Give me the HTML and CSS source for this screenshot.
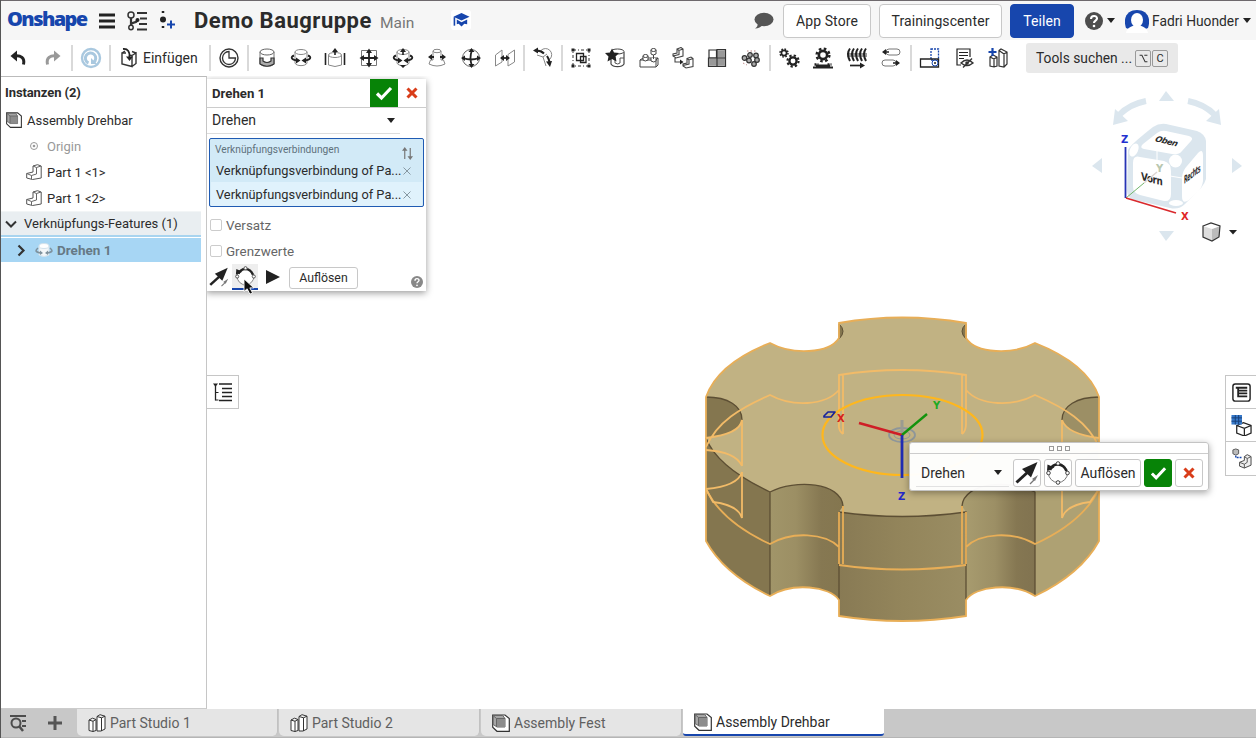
FILE: index.html
```html
<!DOCTYPE html>
<html lang="de">
<head>
<meta charset="utf-8">
<title>Demo Baugruppe</title>
<link rel="stylesheet" href="styles.css">
</head>
<body>
<svg class="defs" aria-hidden="true">
  <symbol id="assembly" viewBox="0 0 18 18"><path d="M.700 1h12.300l4.300 3.500v12.800H5l-4.300-4z" fill="#fff" stroke="#333" stroke-width="1.200"/><path d="M1.200 1.500h9.500l2.300 3V13H5l-3.800-2.500z" fill="#a6a6a6" stroke="#666"/><path d="M4.500 4.500H13V13H4.500z" fill="#8c8c8c"/><path d="M1 1.500l3.500 3H13M4.500 4.500V13" fill="none" stroke="#666"/></symbol>
  <symbol id="part" viewBox="0 0 16 16"><path d="M7 2L11.500.700 15.200 2v12l-8.700 1.500L.700 14V9.500L7 8z" fill="#fff" stroke="#555"/><path d="M7 2l3.500 1.500L15 2M10.500 3.500V10l-5 1.500v3.500M.700 9.500l4.800 2" fill="none" stroke="#666"/></symbol>
  <symbol id="studio" viewBox="0 0 18 18"><path d="M1 6l3.500-1.800L8 5.500v11L5 17.500l-4-1zM1 6l4 1.300L8 5.500M5 7.300v10.200M9 2.500L12 .700l5 1.500V15l-4 2H9zM9 2.500l4.500 1.300L17 2.200M13.500 3.800V17" fill="#fff" stroke="#333"/></symbol>
  <symbol id="check" viewBox="0 0 18 16"><path d="M2 8.500l4.500 4.500L16 3" fill="none" stroke="#fff" stroke-width="3.200"/></symbol>
  <symbol id="cross" viewBox="0 0 12 12"><path d="M1.500 1.500l9 9m0-9l-9 9" stroke="#d93d1a" stroke-width="3"/></symbol>
  <symbol id="arrow" viewBox="0 0 24 24"><path d="M1.500 21.500L14 10" stroke="#222" stroke-width="3"/><path d="M22.500 1L7 8l9 8.500z" fill="#222"/><path d="M15 23l4-4" stroke="#777" stroke-width="1.300"/><path d="M23 14l-6 4 3 2z" fill="#777"/></symbol>
  <symbol id="spin" viewBox="0 0 24 24"><circle cx="12" cy="12" r="9.500" fill="#fff" stroke="#777"/><path d="M4 9C7 1.500 17 1.500 20.500 10" fill="none" stroke="#222" stroke-width="2.600"/><path d="M1 10l.5-6.500 7 3z" fill="#222"/><g fill="#fff" stroke="#444"><circle cx="12" cy="2.500" r="1.800"/><circle cx="21.500" cy="12" r="1.800"/><circle cx="12" cy="21.500" r="1.800"/><circle cx="2.500" cy="12" r="1.800"/></g></symbol>
  <symbol id="revolve" viewBox="0 0 22 22"><path d="M5 5v11c1 3.500 11 3.500 12 0V5" fill="#fff" stroke="#888"/><ellipse cx="11" cy="5" rx="6" ry="2.500" fill="#fff" stroke="#888"/><path d="M4 8.500C0 10 1.500 13 7 13.500M18 8.500C22 10 20.500 13 15 13.500" fill="none" stroke="#222" stroke-width="1.900"/><path d="M6 10.500l4.500 3-4.500 3zM16 10.500l-4.500 3 4.500 3z" fill="#222"/></symbol>
  <symbol id="gear" viewBox="0 0 12 12"><circle cx="6" cy="6" r="3.100" fill="none" stroke="#222" stroke-width="2"/><circle cx="6" cy="6" r="4.800" fill="none" stroke="#222" stroke-width="1.800" stroke-dasharray="1.950 1.820"/></symbol>
  <symbol id="help" viewBox="0 0 18 18"><circle cx="9" cy="9" r="9" fill="currentColor"/><path d="M6 7c0-4 6-4 6-.5 0 2.300-3 2-3 4.500" fill="none" stroke="#fff" stroke-width="2.100"/><circle cx="9" cy="14" r="1.300" fill="#fff"/></symbol>
</svg>

<header class="topbar">
  <div class="logo">Onshape</div>
  <svg class="menu" viewBox="0 0 18 16"><path d="M1 2h16M1 8h16M1 14h16" stroke="#222" stroke-width="3"/></svg>
  <svg class="versions" viewBox="0 0 22 20"><g fill="none" stroke="#333" stroke-width="1.500"><circle cx="5" cy="4" r="3"/><circle cx="5" cy="16.500" r="2.200"/><path d="M5 7v7M5.500 13c2-3 6 0 6-5" stroke-width="2.200"/><path d="M11 2h10M14 7.500h7M13 13h8M11 18.500h10" stroke-width="1.800"/></g><circle cx="11.500" cy="9" r="2" fill="#222"/></svg>
  <svg class="addversion" viewBox="0 0 18 20"><path d="M5 0v3M5 15v3" stroke="#222" stroke-width="2.500" stroke-dasharray="2 1"/><circle cx="5" cy="8.500" r="3" fill="#222"/><path d="M13 9.500v8M9 13.500h8" stroke="#1746ad" stroke-width="2"/></svg>
  <h1 class="title">Demo Baugruppe</h1>
  <span class="branch">Main</span>
  <span class="edu"><svg viewBox="0 0 18 16"><path d="M9 .5l8.500 4L9 8.500.5 4.500z" fill="#1746ad"/><path d="M4 7.500v5l2-.5 3 3 3-3 3 .5v-5L9 10.500z" fill="#1746ad"/><path d="M1.500 5v9" stroke="#1746ad" stroke-width="1.700"/></svg></span>
  <svg class="chat" viewBox="0 0 20 18"><ellipse cx="10" cy="7.500" rx="9.500" ry="6.700" fill="#555"/><path d="M4 10q0 5-3 6.500 5 0 8-4z" fill="#555"/></svg>
  <button class="btn store">App Store</button>
  <button class="btn training">Trainingscenter</button>
  <button class="btn share">Teilen</button>
  <svg class="help" viewBox="0 0 18 18"><use href="#help"/></svg><i class="caret"></i>
  <svg class="avatar" viewBox="0 0 24 24"><path d="M1 19C-3 7 4 1 12 1s15 6 11 18l-5 2H6z" fill="#1746ad"/><ellipse cx="12" cy="11" rx="6" ry="7" fill="#fff"/><path d="M1 24c1-6 6-6 8-8h6c2 2 7 2 8 8z" fill="#fff"/></svg>
  <span class="user">Fadri Huonder</span><i class="caret"></i>
</header>

<nav class="toolbar">
  <span class="tool"><svg viewBox="0 0 22 22"><path d="M7 9C14 8 18 11 16.500 17.500" fill="none" stroke="#222" stroke-width="3"/><path d="M3.500 9L10 3.500v11z" fill="#222"/></svg></span>
  <span class="tool redo"><svg viewBox="0 0 22 22"><path d="M15 9C8 8 4 11 5.500 17.500" fill="none" stroke="#999" stroke-width="3"/><path d="M18.500 9L12 3.500v11z" fill="#999"/></svg></span>
  <i class="sep"></i>
  <span class="tool"><svg viewBox="0 0 22 22"><circle cx="11" cy="11" r="9" fill="none" stroke="#a9c8df" stroke-width="2.400"/><path d="M8.500 16a5.200 5.200 0 1 1 5-.5" fill="none" stroke="#a9c8df" stroke-width="3"/><path d="M11 11v6h6z" fill="#a9c8df"/></svg></span>
  <i class="sep"></i>
  <span class="insert"><svg viewBox="0 0 22 22"><path d="M8 6H4v11l10 2.500V8.500l-3-.5M14 8.500L18 6v10.500l-4 3M18 6l-4-1.500M4 6l3-2" fill="none" stroke="#333" stroke-width="1.400"/><path d="M5 2c5-.5 7 3 6.500 8" fill="none" stroke="#222" stroke-width="1.800"/><path d="M8 9.500h7L11.500 14z" fill="#222"/></svg>Einfügen</span>
  <i class="sep"></i>
  <span class="tool"><svg viewBox="0 0 22 22"><circle cx="11" cy="11" r="9" fill="none" stroke="#333" stroke-width="1.400"/><path d="M11 4.500V11H17.500A6.500 6.500 0 1 1 11 4.500z" fill="none" stroke="#333" stroke-width="1.300"/></svg></span>
  <i class="sep"></i>
  <span class="tool"><svg viewBox="0 0 22 22"><path d="M4 5v12c2 3 12 3 14 0V5" fill="#fff" stroke="#777"/><path d="M4 11h3v3q4 3 8 0v-3h3v6q-7 4.500-14 0z" fill="#aaa" stroke="#333" stroke-width="1.200"/><ellipse cx="11" cy="5" rx="7" ry="3" fill="#fff" stroke="#666"/></svg></span>
  <span class="tool"><svg viewBox="0 0 22 22"><use href="#revolve"/></svg></span>
  <span class="tool"><svg viewBox="0 0 22 22"><path d="M4.500 8v10q6.500 3 13 0V8" fill="#fff" stroke="#888"/><ellipse cx="11" cy="8" rx="6.500" ry="2.500" fill="#fff" stroke="#888"/><path d="M1.500 6v12M20.500 6v12M11 8V4" stroke="#222" stroke-width="1.600"/><path d="M8 5l3-4 3 4z" fill="#222"/></svg></span>
  <span class="tool"><svg viewBox="0 0 22 22"><path d="M3.500 3.500h15v15h-15z" fill="none" stroke="#777"/><path d="M11 4v14M4 11h14" stroke="#222" stroke-width="1.800"/><path d="M8 6l3-4.500L14 6zM8 16l3 4.500 3-4.500zM6 8l-4.500 3L6 14zM16 8l4.500 3-4.500 3z" fill="#222"/></svg></span>
  <span class="tool"><svg viewBox="0 0 22 22"><use href="#revolve"/><path d="M11 8V3" stroke="#222" stroke-width="1.600"/><path d="M8 5l3-4 3 4zM8 18l3 3 3-3z" fill="#222"/></svg></span>
  <span class="tool"><svg viewBox="0 0 22 22"><path d="M7 4v9H4.500L3 17q8 4 16 0l-1.500-4H15V4" fill="#fff" stroke="#888"/><ellipse cx="11" cy="4" rx="4" ry="1.700" fill="#fff" stroke="#888"/><path d="M4 10h4M14 10h4" stroke="#222" stroke-width="1.800"/><path d="M6 7l-4 3 4 3zM16 7l4 3-4 3z" fill="#222"/></svg></span>
  <span class="tool"><svg viewBox="0 0 22 22"><circle cx="11" cy="11" r="8.500" fill="none" stroke="#666"/><path d="M12 3Q9 11 12 19M3 11q8 3 16 0" fill="none" stroke="#222" stroke-width="1.800"/><path d="M8.500 5l3-4 3 4zM8.500 17l3 4 3-4zM5 8.500L1 11l4 3zM17 8.500l4 2.500-4 3z" fill="#222"/></svg></span>
  <span class="tool"><svg viewBox="0 0 22 22"><path d="M1.500 8L8 3v12l-6.500 4zM14 7.500L20.500 3v12L14 19z" fill="none" stroke="#888"/><path d="M7 11h8" stroke="#222" stroke-width="1.800"/><path d="M10 8l-4 3 4 3zM12 8l4 3-4 3z" fill="#222"/></svg></span>
  <i class="sep"></i>
  <span class="tool"><svg viewBox="0 0 22 22"><path d="M9 3.500a6 6 0 0 1 9 8.500M5 8l6 2 3 9M11 10l4-3" fill="none" stroke="#888"/><path d="M4 3.500q5 0 8 3M15 9q2 3 2.500 6" fill="none" stroke="#222" stroke-width="2"/><path d="M1 3.500L6 .5v6zM14 14.500l6-.5-2 6z" fill="#222"/></svg></span>
  <i class="sep"></i>
  <span class="tool"><svg viewBox="0 0 22 22"><path d="M3 3h16v16H3z" fill="none" stroke="#333" stroke-dasharray="3 2 1 2"/><path d="M1.500 1.500h3v3h-3zM17.500 1.500h3v3h-3zM1.500 17.500h3v3h-3zM17.500 17.500h3v3h-3z" fill="#222"/><path d="M6.500 6.500h7v7h-7zM10.500 9.500h5.500v6h-5.500z" fill="#fff" stroke="#222" stroke-width="1.300"/></svg></span>
  <span class="tool"><svg viewBox="0 0 22 22"><path d="M7 5v12c2 3.500 11 3.500 13 0V5" fill="#fff" stroke="#444" stroke-width="1.200"/><ellipse cx="13.500" cy="4.500" rx="6.500" ry="2.500" fill="#fff" stroke="#444"/><path d="M11 10v6q3 2 5 0v-5h4" fill="none" stroke="#555"/><path d="M8 1.500l2 4 5 .5-3.500 3.500 1 5L8 12l-4.500 2.500 1-5L1 6l5-.5z" fill="#222"/></svg></span>
  <span class="tool"><svg viewBox="0 0 22 22"><g fill="#fff" stroke="#444"><path d="M2 13l3-2h15v7l-2 2H2zM2 13h16v7M18 13l2-2"/><path d="M5 9v4q2 2 5 0V9M13 3v4q2 2 5 0V3M13 11v3q3 2 5 0v-3"/><ellipse cx="7.500" cy="9" rx="2.500" ry="1.500"/><ellipse cx="15.500" cy="3" rx="2.500" ry="1.500"/><path d="M15.500 8v4"/></g></svg></span>
  <span class="tool"><svg viewBox="0 0 22 22"><path d="M5 2l4-1.500L11 2v7l-7 2-3-2V7l4-1zM5 2l2 1.500L11 2M7 3.500v4L1 9M15 11.500l4-1.500 2 1.500v8L14 21l-3-2v-2l4-1zM15 11.500l2 1.500 4-1.500M17 13v4l-6 1.500M3 11v4h6" fill="none" stroke="#444" stroke-width="1.100"/><path d="M8 12.500l3.500 2.500L8 17.500z" fill="#222"/></svg></span>
  <span class="tool"><svg viewBox="0 0 22 22"><g fill="#aaa" stroke="#333" stroke-width="1.200"><path d="M3 3h7.500v8H3z" fill="#fff"/><path d="M11 2.500h8.500V11H11zM2.500 11H11v8.500H2.500zM11 11h8.500v8.500H11z"/></g><path d="M5 12v6M7 12v6M9 12v6M13 4v6M15 4v6M17 4v6M13 12v6M15 12v6M17 12v6" stroke="#888"/></svg></span>
  <span class="tool"><svg viewBox="0 0 22 22"><g fill="#aaa" stroke="#333" stroke-width="1.200"><circle cx="4.500" cy="11" r="2.300"/><circle cx="10" cy="8" r="2.300"/><circle cx="16" cy="8.500" r="2.300"/><circle cx="9" cy="13.500" r="2.300"/><circle cx="14" cy="17" r="2.300"/><circle cx="17" cy="13" r="2.300"/></g><path d="M7 4h10M3 16l4 2" stroke="#b88" stroke-dasharray="1.500 2"/></svg></span>
  <i class="sep"></i>
  <span class="tool"><svg viewBox="0 0 22 22"><use href="#gear" x="1" y="1" width="10" height="10"/><use href="#gear" x="8" y="7" width="14" height="14"/></svg></span>
  <span class="tool"><svg viewBox="0 0 22 22"><use href="#gear" x="3" y="0" width="16" height="16"/><path d="M1 20.500h20M4 18.500h14" stroke="#222" stroke-width="2"/><path d="M2.500 17.500h4M15.500 17.500h4" stroke="#222" stroke-width="2.500" stroke-dasharray="2 1"/></svg></span>
  <span class="tool"><svg viewBox="0 0 22 22"><path d="M1 8h20" stroke="#999" stroke-width="4"/><path d="M4 1.500q-4 5 0 12.500M8 1.500q-4 5 0 12.500M12 1.500q-4 5 0 12.500M16 1.500q-4 5 0 12.500M20 1.500q-4 5 0 12.500" fill="none" stroke="#222" stroke-width="2"/><path d="M4 18.500h11" stroke="#222" stroke-width="1.700"/><path d="M14 15.500l5 3-5 3z" fill="#222"/></svg></span>
  <span class="tool"><svg viewBox="0 0 22 22"><rect x="6" y="2" width="14" height="6" rx="3" fill="#fff" stroke="#777"/><rect x="2" y="13" width="14" height="6" rx="3" fill="#fff" stroke="#777"/><path d="M4 5h5M13 16h5" stroke="#222" stroke-width="1.600"/><path d="M6 2L2 5l4 3zM16 13l4 3-4 3z" fill="#222"/></svg></span>
  <i class="sep"></i>
  <span class="tool"><svg viewBox="0 0 22 22"><path d="M12 2h7.500v11H12z" fill="none" stroke="#1746ad" stroke-width="1.300" stroke-dasharray="2 1"/><path d="M1.500 12h18v8h-18z" fill="none" stroke="#222" stroke-width="1.300"/><circle cx="16" cy="16" r="3" fill="#fff" stroke="#1746ad"/><circle cx="16" cy="16" r="1" fill="#222"/></svg></span>
  <span class="tool"><svg viewBox="0 0 22 22"><path d="M8 18H4V2h13v8M6 5.500h9M6 8.500h9M6 11.500h5" fill="none" stroke="#222" stroke-width="1.200"/><path d="M8 16q6-6 12 0-6 5-12 0zM10 20.500l9-9" fill="none" stroke="#333" stroke-width="1.400"/><circle cx="14" cy="16" r="1.800" fill="#333"/></svg></span>
  <span class="tool"><svg viewBox="0 0 22 22"><path d="M3 10l3-2 4 2v9l-3 1-4-1zM3 10l4 2 3-2M7 12v8M12 3.500L14 2l6 3v12l-3 3-5-1zM12 3.500l5 3.500 3-2M17 7v13" fill="#fff" stroke="#333" stroke-width="1.200"/><path d="M5.500 1v8M1.500 5h8" stroke="#1746ad" stroke-width="2.200"/></svg></span>
  <div class="search"><span>Tools suchen ...</span><kbd><svg viewBox="0 0 14 14"><path d="M2 3h3l4 8h3M8 3h4" fill="none" stroke="#333" stroke-width="1.300"/></svg></kbd><kbd>C</kbd></div>
</nav>

<main class="workspace">
  <aside class="tree">
    <h2 class="tree-head">Instanzen (2)</h2>
    <div class="row root"><svg viewBox="0 0 18 18"><use href="#assembly"/></svg>Assembly Drehbar</div>
    <div class="row origin"><svg viewBox="0 0 16 16"><circle cx="8" cy="8" r="3.500" fill="none" stroke="#999"/><circle cx="8" cy="8" r="1.300" fill="#999"/></svg>Origin</div>
    <div class="row child"><svg viewBox="0 0 16 16"><use href="#part"/></svg>Part 1 &lt;1&gt;</div>
    <div class="row child"><svg viewBox="0 0 16 16"><use href="#part"/></svg>Part 1 &lt;2&gt;</div>
    <div class="row group"><svg viewBox="0 0 12 12"><path d="M1 3.500l5 5 5-5" fill="none" stroke="#333" stroke-width="2"/></svg>Verknüpfungs-Features (1)</div>
    <div class="row selected"><svg class="chevron" viewBox="0 0 12 12"><path d="M3.500 1l5 5-5 5" fill="none" stroke="#333" stroke-width="2.200"/></svg><svg class="mate" viewBox="0 0 18 16"><path d="M4 4v9q5 3 10 0V4" fill="#f4f7f9" stroke="#d3e2ec"/><ellipse cx="9" cy="4" rx="5" ry="2.500" fill="#fff" stroke="#d3e2ec"/><path d="M3 6q-5 4 3 5M15 6q5 4-3 5" fill="none" stroke="#7f929e" stroke-width="1.600"/><path d="M5 8.500l3 2.500-3 2zM13 8.500l-3 2.500 3 2z" fill="#7f929e"/></svg>Drehen 1</div>
  </aside>

  <section class="canvas">
    <svg class="scene" viewBox="207 76 1049 633">
      <defs>
        <linearGradient id="notch"><stop offset="0" stop-color="#a19569"/><stop offset=".35" stop-color="#9c8f64"/><stop offset=".7" stop-color="#867852"/><stop offset="1" stop-color="#84764f"/></linearGradient>
        <linearGradient id="notch2"><stop offset="0" stop-color="#a99d70"/><stop offset=".45" stop-color="#9c8f65"/><stop offset=".75" stop-color="#857752"/><stop offset="1" stop-color="#817350"/></linearGradient>
        <linearGradient id="front"><stop offset="0" stop-color="#887a54"/><stop offset=".5" stop-color="#93855b"/><stop offset="1" stop-color="#9a8d63"/></linearGradient>
      </defs>
      <path fill="#c1b283" d="M706 397C714 374 737 356 770 343C792 355 829 354 839 338V323Q902 312 966 323V338C976 354 1013 355 1035 343C1068 356 1091 374 1099 397V541L1035 596V492L966 512Q902 521 839 512L770 492V596L706 541Z"/>
      <path fill="#84764f" d="M706 397C728 397 742 406 742 418Q739 435 706 438Z"/>
      <path fill="#9c8f65" d="M1099 397C1077 397 1062 406 1062 420Q1068 435 1099 438Z"/>
      <path fill="#84764f" d="M706 438Q717 467 770 492V596Q724 574 706 541Z"/>
      <path fill="#aea173" d="M1099 438Q1088 467 1035 492V596Q1081 574 1099 541Z"/>
      <path fill="url(#notch)" d="M770 492C795 479 841 482 843 506L839 512V600C830 586 792 582 770 596Z"/>
      <path fill="url(#notch2)" d="M1035 492C1010 479 964 482 962 506L966 512V600C975 586 1013 582 1035 596Z"/>
      <path fill="url(#front)" d="M839 512Q902 521 966 512V616Q902 626 839 616Z"/>
      <path fill="#84764f" stroke="#5d4f34" d="M839 324q8 7 0 15zM966 324q-8 7 0 15z"/>
      <path fill="none" stroke="#5d4f34" stroke-width="1.300" d="M706 397C728 397 742 406 742 420M706 438Q717 467 770 492V596M770 492C795 479 841 482 843 506M839 512Q902 521 966 512V600M839 512V600M1035 596V492C1010 479 964 482 962 506M1099 397C1077 397 1062 406 1062 420"/>
      <g fill="none" stroke="#e8ae57" stroke-width="1.800">
        <path d="M706 397C714 374 737 356 770 343C792 355 829 354 839 338V323Q902 312 966 323V338C976 354 1013 355 1035 343C1068 356 1091 374 1099 397V541Q1081 574 1035 596C1013 582 975 586 966 600V616Q902 626 839 616V600C830 586 792 582 770 596Q724 574 706 541Z"/>
        <path d="M706 489Q722 522 770 544C792 531 825 533 839 547M1099 489Q1083 522 1035 544C1013 531 980 533 966 547M839 565Q902 574 966 565M839 512V564M843 506V564M966 512V564M962 506V564"/>
      </g>
      <g fill="none" stroke="#f2bb68" stroke-width="1.800">
        <path d="M706 447C717 422 740 408 770 395C792 407 825 406 839 390M843 434Q838 430 839 424V375Q902 365 966 375V424Q966 431 962 434M843 375V434M962 375V434M1099 447C1088 422 1065 408 1035 395C1013 407 980 406 966 390M706 438Q740 434 742 420V466M706 450Q736 452 742 466M742 472Q738 486 706 489M742 472V518Q738 505 713 502L706 489M1099 438Q1067 434 1062 420V518Q1066 505 1090 502L1099 489M1099 450Q1069 452 1062 466"/>
      </g>
      <ellipse cx="902.500" cy="435" rx="80" ry="40" fill="none" stroke="#ffb71c" stroke-width="2.200"/>
      <g fill="none" stroke="#8e9699"><ellipse cx="902" cy="435" rx="13" ry="7" stroke-width="1.800"/><ellipse cx="902" cy="435" rx="8" ry="4"/></g>
      <path d="M902 420v14" stroke="#9b9b91" stroke-width="3"/>
      <path d="M902 435l-43-12" stroke="#cf1e26" stroke-width="2.600"/><path d="M902 435l25-21" stroke="#13930d" stroke-width="2.300"/><path d="M902 435v43" stroke="#202cb2" stroke-width="2.800"/>
      <path d="M824 416l4-4h7l-4 5h-7z" fill="none" stroke="#17249c" stroke-width="1.700" stroke-linejoin="round"/>
      <g class="axis-label"><text x="837" y="422" fill="#d61f1f">X</text><text x="933" y="409" fill="#1daa22">Y</text><text x="898" y="500" fill="#2529c8">Z</text></g>
      <g fill="#dbe6ee">
        <path d="M1166 91l8 10h-15zM1166 241l8-10h-15zM1092 166l10-8v15zM1242 166l-10-8v15z"/>
        <path d="M1113 125l2-16 13 12zM1221 125l-2-16-13 12z"/>
        <path d="M1119 115Q1130 104 1146 101M1215 115Q1204 104 1188 101" fill="none" stroke="#dbe6ee" stroke-width="6"/>
        <path d="M1128 150q2-5 25-23 6-4 13-3l31 7q8 3 9 10v38q-1 4-5 9l-16 16q-6 6-15 4l-35-8q-8-2-8-9z"/>
      </g>
      <g fill="#fff">
        <path d="M1143 144l14-11q4-3 9-2l23 5q5 2 2 5l-9 10q-3 4-10 3l-28-5q-5-1-1-5z"/>
        <path d="M1133 163q0-8 7-6l24 4q7 2 7 10v23q0 8-7 7l-24-6q-7-2-7-8z"/>
        <path d="M1182 177q1-7 5-11l11-13q5-5 5 3v25q-1 7-5 11l-9 8q-7 5-7-4z"/>
        <circle cx="1175.500" cy="161" r="6.500"/><ellipse cx="1134" cy="150" rx="4" ry="7" transform="rotate(25 1134 150)"/><ellipse cx="1176" cy="203" rx="7" ry="3"/><path d="M1157 149v13M1170 176l12 2" stroke="#fff"/>
      </g>
      <g class="cube-label"><text transform="matrix(.9 .22 -.5 .8 1154 141)">Oben</text><text class="face-front" transform="matrix(.8 .2 0 1 1141 180)">Vorn</text><text transform="matrix(.52 -.4 0 1.200 1184 184)">Rechts</text></g>
      <path d="M1126 198l18-15" stroke="#72b66c"/><path d="M1144 183l13-11" stroke="#ded6d1" stroke-width="1.500"/>
      <path d="M1125.500 198v-51" stroke="#2634b5" stroke-width="1.800"/><path d="M1126 198l50 15" stroke="#d9292d" stroke-width="1.800"/>
      <g class="axis-label"><text x="1121" y="143" fill="#2331d0">Z</text><text x="1181" y="220" fill="#df2626">X</text><text x="1156" y="172" fill="#b9c7af">Y</text></g>
      <path d="M1203 226l8-3 9 3-1 11-7 4-9-4z" fill="#ddd"/><path d="M1212 229l8-3-1 11-7 4z" fill="#bbb"/><path d="M1203 226l8-3 9 3-8 3z" fill="#fff"/><path d="M1203 226l8-3 9 3-1 11-7 4-9-4z" fill="none" stroke="#333" stroke-width="1.200"/><path d="M1229 230h8l-4 4.500z" fill="#222"/>
    </svg>

    <div class="side-tab"><svg viewBox="0 0 20 20"><path d="M6 2h13M9 6.500h10M9 10.500h10M9 14.500h10M6 18.500h13M2.500 4v14.500" fill="none" stroke="#222" stroke-width="1.300"/><path d="M0 1.500h5L2.500 5z" fill="#222"/><path d="M2.500 10.500h3M2.500 18h3" fill="none" stroke="#222" stroke-width="1.200"/></svg></div>

    <div class="dialog">
      <div class="dialog-head"><b>Drehen 1</b><span class="accept"><svg viewBox="0 0 18 16"><use href="#check"/></svg></span><span class="reject"><svg viewBox="0 0 12 12"><use href="#cross"/></svg></span></div>
      <div class="select"><span>Drehen</span><i class="caret"></i></div>
      <div class="mates">
        <div class="mates-title"><span>Verknüpfungsverbindungen</span><svg viewBox="0 0 12 14"><path d="M3 13V3M9 1v10" stroke="#777" stroke-width="1.300"/><path d="M0 4l3-4 3 4zM6 10l3 4 3-4z" fill="#777"/></svg></div>
        <div class="mate-row"><span>Verknüpfungsverbindung of Pa...</span><svg viewBox="0 0 8 8"><path d="M.5.500l7 7m0-7l-7 7" stroke="#8798a2"/></svg></div>
        <div class="mate-row light"><span>Verknüpfungsverbindung of Pa...</span><svg viewBox="0 0 8 8"><path d="M.5.500l7 7m0-7l-7 7" stroke="#8798a2"/></svg></div>
      </div>
      <div class="option"><i></i>Versatz</div>
      <div class="option"><i></i>Grenzwerte</div>
      <div class="actions"><svg class="a-arrow" viewBox="0 0 24 24"><use href="#arrow"/></svg><span class="a-spin"><svg viewBox="0 0 24 24"><use href="#spin"/></svg></span><svg class="a-play" viewBox="0 0 14 14"><path d="M0 0l14 7-14 7z" fill="#222"/></svg><button class="solve">Auflösen</button><svg class="a-help" viewBox="0 0 18 18"><use href="#help"/></svg></div>
    </div>
    <svg class="pointer" viewBox="0 0 14 20"><path d="M2 1v14l3.500-3 3 6 3-1.500-3-5.500H13z" fill="#111" stroke="#fff"/></svg>

    <div class="floating">
      <div class="grip"><i></i><i></i><i></i></div>
      <div class="float-body"><div class="float-select">Drehen<i class="caret"></i></div><button><svg class="large" viewBox="0 0 24 24"><use href="#arrow"/></svg></button><button><svg class="large" viewBox="0 0 24 24"><use href="#spin"/></svg></button><button class="float-solve">Auflösen</button><button class="green"><svg viewBox="0 0 18 16"><use href="#check"/></svg></button><button><svg class="small" viewBox="0 0 12 12"><use href="#cross"/></svg></button></div>
    </div>

    <div class="rail">
      <span><svg viewBox="0 0 22 22"><rect x="2" y="2" width="18" height="18" rx="2.500" fill="#fff" stroke="#222" stroke-width="1.500"/><path d="M5 6h12M8 9h9M8 12h9M8 15h9M7.500 6v10" stroke="#222" stroke-width="1.900"/></svg></span>
      <span><svg viewBox="0 0 22 22"><path d="M6 11l7-3 8 3v8l-7 3-8-3zM6 11l8 3 7-3M14 14v8" fill="#fff" stroke="#222" stroke-width="1.300"/><path d="M.5 0h11v10H.5z" fill="#3779c9"/><path d="M.5 3h11M.5 6.500h11M4.500 0v10M8 0v10" stroke="#173f79"/></svg></span>
      <span><svg viewBox="0 0 22 22"><path d="M2 2l3-1 3 1v4L5 7.500 2 6z" fill="#bbb" stroke="#555"/><path d="M14 9l3-2 4 2v9l-7 3-5-2v-4l5-2z" fill="#eee" stroke="#444"/><path d="M9 15l5 2v4M14 9l3 2 4-2M17 11v4l-3 2" fill="none" stroke="#555"/><path d="M5 8v2h7" fill="none" stroke="#1746ad" stroke-width="1.500" stroke-dasharray="2 1"/></svg></span>
    </div>
  </section>
</main>

<footer class="tabs">
  <div class="tab-tools"><svg viewBox="0 0 18 18"><path d="M1 2h16M13 7h4M13 12h4" stroke="#4d4d4d" stroke-width="2"/><circle cx="7" cy="9" r="4.500" fill="none" stroke="#4d4d4d" stroke-width="2"/><path d="M10 12l4 5" stroke="#4d4d4d" stroke-width="2.500"/></svg><svg viewBox="0 0 18 18"><path d="M9 2v14M2 9h14" stroke="#555" stroke-width="3"/></svg></div>
  <div class="tab"><svg viewBox="0 0 18 18"><use href="#studio"/></svg>Part Studio 1</div>
  <div class="tab"><svg viewBox="0 0 18 18"><use href="#studio"/></svg>Part Studio 2</div>
  <div class="tab"><svg viewBox="0 0 18 18"><use href="#assembly"/></svg>Assembly Fest</div>
  <div class="tab active"><svg viewBox="0 0 18 18"><use href="#assembly"/></svg>Assembly Drehbar</div>
</footer>
</body>
</html>
```
FILE: styles.css
```css
* { box-sizing: border-box; }
body { margin: 0; width: 1256px; height: 738px; overflow: hidden; display: flex; flex-direction: column; font-family: Roboto, "Liberation Sans", sans-serif; font-size: 14px; color: #2b2b2b; background: #fff; border-left: 1px solid #555; }
svg { display: block; flex: none; }
.defs { display: none; }
button { font: inherit; color: inherit; padding: 0; margin: 0; background: #fff; border: 1px solid #c8c8c8; border-radius: 3px; white-space: nowrap; }
.caret { flex: none; width: 0; height: 0; border: 4px solid transparent; border-top: 5px solid #222; border-bottom: 0; }

.topbar { flex: none; height: 40px; display: flex; align-items: center; background: #f6f6f6; border-top: 1px solid #6e696d; }
.logo { width: 91px; padding-left: 6px; color: #1746ad; font: 800 20px "Open Sans", sans-serif; letter-spacing: -1.600px; line-height: 32px; margin-top: -3px; }
.menu { width: 18px; height: 16px; margin-left: 6px; }
.versions { width: 22px; height: 20px; margin-left: 10px; }
.addversion { width: 18px; height: 20px; margin-left: 10px; }
.title { margin: 0; width: 178px; margin-left: 18px; font-size: 22px; line-height: 26px; font-weight: 700; letter-spacing: .500px; white-space: nowrap; }
.branch { width: 42px; margin-left: 8px; font-size: 15.500px; color: #777; padding-top: 4px; }
.edu { width: 20px; height: 20px; margin: -1px 0 0 29px; background: #fff; border-radius: 3px; display: grid; place-items: center; }
.edu svg { width: 17px; height: 16px; }
.chat { width: 20px; height: 18px; margin-left: 283px; }
.btn { height: 34px; border-radius: 4px; font-size: 14px; letter-spacing: .100px; }
.store { width: 88px; margin-left: 9px; }
.training { width: 123px; margin-left: 8px; }
.share { width: 64px; margin-left: 8px; background: #1746ad; border-color: #1746ad; color: #fff; }
.help { width: 18px; height: 18px; margin-left: 11px; margin-right: 4px; color: #4d4d4d; }
.avatar { width: 24px; height: 24px; margin-left: 10px; }
.user { width: 88px; margin: 0 3px; white-space: nowrap; font-size: 13.800px; }

.toolbar { flex: none; height: 36px; display: flex; align-items: center; background: #fff; }
.tool { flex: none; width: 34px; height: 34px; display: grid; place-items: center; }
.tool svg, .insert svg { width: 22px; height: 22px; }
.redo { margin-left: 1px; }
.sep { flex: none; width: 4px; height: 26px; border-left: 1px solid #fff; border-right: 1px solid #fff; background: #d9d9d9; }
.sep:last-of-type { margin-left: 1px; }
.insert { flex: none; width: 96px; display: flex; align-items: center; gap: 3px; padding-left: 6px; white-space: nowrap; }
.search { flex: none; width: 152px; height: 30px; margin-left: 11px; padding-left: 10px; border-radius: 3px; background: #e9e9e9; display: flex; align-items: center; }
.search span { width: 99px; font-size: 13.800px; }
.search kbd { width: 16px; height: 17px; margin-right: 1px; font: 11px Roboto, sans-serif; border: 1px solid #999; border-radius: 2px; display: grid; place-items: center; }
.search kbd svg { width: 11px; height: 11px; }

.workspace { flex: none; height: 633px; display: flex; }
.tree { flex: none; width: 206px; border-top: 1px solid #bbb; border-right: 1px solid #c6c6c6; border-bottom: 1px solid #ccc; padding-right: 5px; font-size: 13px; }
.tree-head { margin: 0; height: 30px; padding: 1px 0 0 4px; font-size: 13px; line-height: 30px; font-weight: 700; letter-spacing: -.1px; }
.row { height: 26px; display: flex; align-items: center; white-space: nowrap; }
.root { padding-left: 5px; gap: 5px; }
.root svg, .child svg, .origin svg { width: 16px; height: 16px; }
.origin { padding-left: 25px; gap: 5px; color: #999; }
.child { padding-left: 25px; gap: 5px; }
.group { padding-left: 4px; gap: 7px; background: #e9eef1; border-bottom: 2px solid #a8d4ef; border-top: 1px solid #f2f5f6; }
.group svg { width: 12px; height: 12px; }
.selected { height: 24px; margin-top: 1px; padding-left: 14px; background: #a7d6f4; color: #667985; font-weight: 700; font-size: 13.500px; }
.chevron { width: 12px; height: 13px; margin-right: 8px; }
.mate { width: 18px; height: 16px; margin-right: 4px; }

.canvas { position: relative; flex: 1; overflow: hidden; }
.scene { width: 1049px; height: 633px; }
.axis-label { font: bold 10px "DejaVu Sans", sans-serif; }
.cube-label { font: bold 9px "DejaVu Sans", sans-serif; fill: #2d2d2d; letter-spacing: -.5px; }
.face-front { font-size: 11px; }
.side-tab { position: absolute; left: 0; top: 299px; width: 32px; height: 34px; border: 1px solid #c6c6c6; border-left: 0; background: #fff; display: grid; place-items: center; }
.side-tab svg { width: 20px; height: 20px; }

.dialog { position: absolute; left: -1px; top: 3px; width: 220px; height: 212px; background: #fff; box-shadow: 0 2px 7px rgba(0,0,0,.4); }
.dialog-head { height: 29px; display: flex; align-items: center; padding-left: 6px; border-bottom: 1px solid #ccc; }
.dialog-head b { width: 158px; font-size: 13.200px; }
.accept { width: 28px; height: 28px; background: #078307; display: grid; place-items: center; }
.accept svg { width: 18px; height: 16px; }
.reject { width: 28px; display: grid; place-items: center; }
.reject svg { width: 12px; height: 12px; }
.select { width: 194px; height: 26px; padding: 0 5px 1px 6px; display: flex; align-items: center; justify-content: space-between; border-bottom: 1px solid #ddd; }
.mates { width: 215px; height: 69px; margin: 4px 0 0 3px; border: 1px solid #205bb3; border-radius: 2px; background: #d2eaf7; }
.mates-title { height: 19px; padding: 4px 10px 0 5px; font-size: 10.200px; line-height: 14px; color: #60717c; display: flex; justify-content: space-between; }
.mates-title svg { width: 11px; height: 13px; margin-top: 4px; }
.mate-row { height: 24px; margin: 0 1px; padding: 0 11px 0 5px; display: flex; align-items: center; justify-content: space-between; white-space: nowrap; font-size: 12.800px; }
.mate-row.light { height: 24px; background: #e0f2fc; }
.mate-row svg { width: 8px; height: 8px; margin-top: 2px; }
.option { height: 26px; padding-left: 4px; display: flex; align-items: center; gap: 4px; color: #666; font-size: 13.400px; }
.mates + .option { margin-top: 5px; }
.option i { width: 12px; height: 12px; border: 1px solid #ccc; border-radius: 2px; }
.actions { display: flex; align-items: center; height: 26px; }
.a-arrow { width: 20px; height: 20px; margin-left: 3px; }
.a-spin { width: 26px; height: 26px; margin-left: 3px; display: grid; place-items: center; background: #eee; border-bottom: 2px solid #1746ad; }
.a-spin svg { width: 21px; height: 21px; }
.a-play { width: 14px; height: 14px; margin-left: 8px; }
.solve { width: 69px; height: 22px; margin-left: 9px; font-size: 12.300px; margin-top: 2px; }
.a-help { width: 12px; height: 12px; margin: 10px 0 0 53px; color: #888; }
.pointer { position: absolute; left: 35px; top: 202px; width: 13px; height: 18px; }

.floating { position: absolute; left: 702px; top: 366px; width: 300px; height: 49px; border: 1px solid #c4c4c4; border-radius: 3px; background: rgba(255,255,255,.97); box-shadow: 0 2px 7px rgba(0,0,0,.35); }
.grip { height: 11px; border-bottom: 1px solid #ccc; display: flex; justify-content: center; align-items: center; gap: 3px; }
.grip i { width: 5px; height: 5px; border: 1px solid #999; }
.float-body { display: flex; align-items: center; height: 36px; padding: 2px 0 0 6px; }
.float-body button { width: 28px; height: 28px; margin-right: 3px; display: grid; place-items: center; }
.float-select { width: 93px; height: 28px; margin-right: 4px; padding: 0 7px 0 5px; display: flex; align-items: center; justify-content: space-between; border-bottom: 1px solid #e2e2e2; }
.large { width: 24px; height: 24px; }
.small { width: 12px; height: 12px; }
.float-body .float-solve { width: 66px; }
.float-body .green { background: #078307; border-color: #078307; }
.green svg { width: 17px; height: 16px; }
.rail { position: absolute; right: 0; top: 299px; width: 31px; border: 1px solid #c6c6c6; border-right: 0; background: #fff; }
.rail span { height: 33px; display: grid; place-items: center; border-bottom: 1px solid #c6c6c6; }
.rail span:last-child { border-bottom: 0; }
.rail svg { width: 21px; height: 21px; margin-left: 1px; }

.tabs { flex: none; height: 29px; display: flex; background: #c8c8c8; border-bottom: 1px solid #b5b5b5; }
.tab-tools { width: 76px; display: flex; align-items: center; padding-left: 8px; gap: 19px; }
.tab-tools svg { width: 18px; height: 18px; }
.tab { width: 201px; margin-right: 1px; height: 27px; padding-left: 11px; display: flex; align-items: center; gap: 4px; background: #e5e5e5; color: #606060; border-radius: 0 0 5px 5px; border-right: 1px solid #c1c1c1; }
.tab svg { width: 18px; height: 18px; }
.tab.active { background: #fff; color: #2b2b2b; border-right: 0; border-bottom: 2px solid #1746ad; border-radius: 0 0 3px 3px; }
```
